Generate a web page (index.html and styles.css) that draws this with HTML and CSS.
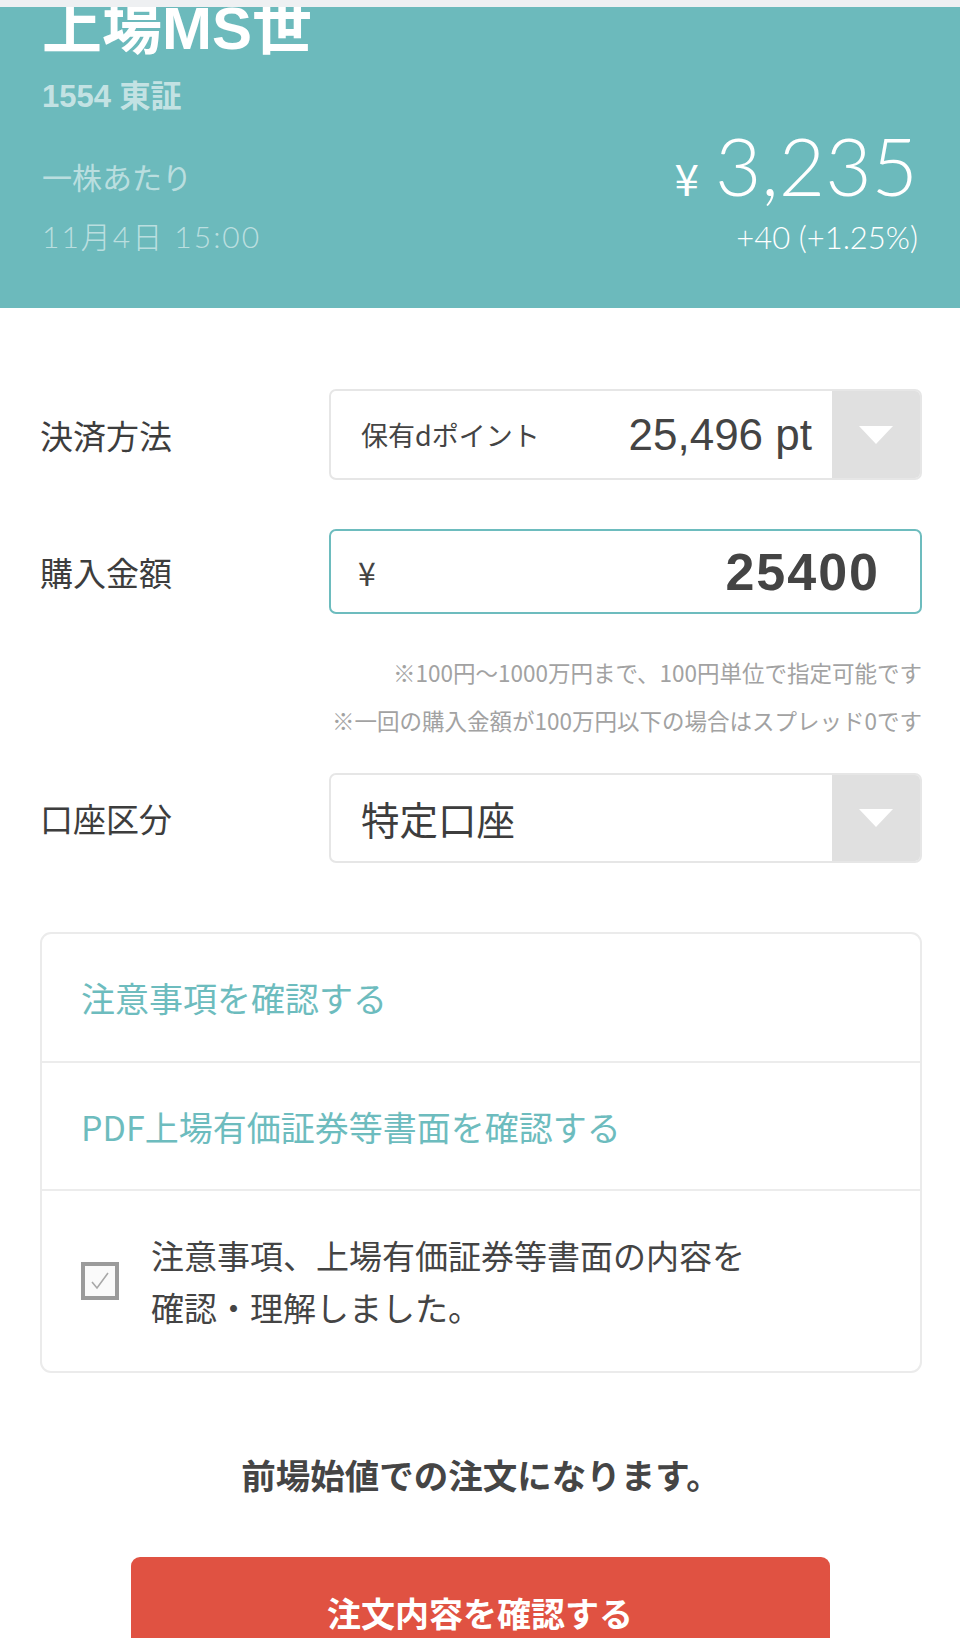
FILE: index.html
```html
<!DOCTYPE html>
<html lang="ja">
<head>
<meta charset="utf-8">
<link rel="stylesheet" href="styles.css">
</head>
<body>
<div class="topbar"></div>
<header class="hero">
  <div class="hero-left">
    <div class="title">上場MS世</div>
    <div class="code">1554 東証</div>
    <div class="per">一株あたり</div>
    <div class="date">11月4日 15:00</div>
  </div>
  <div class="hero-right">
    <div class="price"><span class="yen">¥</span><span class="num">3,235</span></div>
    <div class="change">+40 (+1.25%)</div>
  </div>
</header>

<main class="form">
  <div class="row row-pay">
    <div class="label">決済方法</div>
    <div class="select">
      <div class="select-body">
        <span class="sub">保有dポイント</span>
        <span class="pts">25,496 pt</span>
      </div>
      <div class="arrow"><span class="tri"></span></div>
    </div>
  </div>

  <div class="row row-amount">
    <div class="label">購入金額</div>
    <div class="input">
      <span class="input-yen">¥</span>
      <span class="input-val">25400</span>
    </div>
  </div>

  <div class="notes">
    <p>※100円～1000万円まで、100円単位で指定可能です</p>
    <p>※一回の購入金額が100万円以下の場合はスプレッド0です</p>
  </div>

  <div class="row row-account">
    <div class="label">口座区分</div>
    <div class="select">
      <div class="select-body">
        <span class="acct">特定口座</span>
      </div>
      <div class="arrow"><span class="tri"></span></div>
    </div>
  </div>

  <div class="card">
    <div class="card-row link">注意事項を確認する</div>
    <div class="card-row link">PDF上場有価証券等書面を確認する</div>
    <div class="card-row check">
      <span class="box">
        <svg width="22" height="22" viewBox="0 0 22 22"><path d="M3 12 L8 18 L19 3" fill="none" stroke="#a8a8a8" stroke-width="1.6"/></svg>
      </span>
      <span class="check-text">注意事項、上場有価証券等書面の内容を<br>確認・理解しました。</span>
    </div>
  </div>

  <p class="notice">前場始値での注文になります。</p>

  <div class="btn">注文内容を確認する</div>
</main>
</body>
</html>
```

FILE: styles.css
```css
* { box-sizing: border-box; }
html, body { margin: 0; padding: 0; }
body {
  background: #ffffff;
  font-family: "Noto Sans CJK JP", sans-serif;
  color: #444;
  width: 960px;
  height: 1638px;
  overflow: hidden;
}
.topbar {
  height: 7px;
  background: #eef0f2;
  position: relative;
  z-index: 2;
}
.hero {
  height: 301px;
  background: #6cbabc;
  display: flex;
  justify-content: space-between;
  padding: 0 42px 0 42px;
  overflow: hidden;
}
.hero-left { display: flex; flex-direction: column; }
.title {
  font-size: 60px;
  font-weight: 700;
  line-height: 60px;
  color: #fff;
  margin-top: -8px;
  font-family: "Liberation Sans", "Noto Sans CJK JP", sans-serif;
  white-space: nowrap;
}
.code {
  font-size: 31px;
  font-weight: 700;
  line-height: 40px;
  margin-top: 18px;
  color: rgba(255,255,255,0.62);
  font-family: "Liberation Sans", "Noto Sans CJK JP", sans-serif;
}
.per {
  font-size: 30px;
  font-weight: 400;
  line-height: 40px;
  margin-top: 39px;
  color: rgba(255,255,255,0.55);
}
.date {
  font-size: 30px;
  line-height: 40px;
  margin-top: 20px;
  color: rgba(255,255,255,0.55);
  font-family: "Lato", "Noto Sans CJK JP", sans-serif;
  font-weight: 300;
  letter-spacing: 2px;
}
.hero-right {
  display: flex;
  flex-direction: column;
  align-items: flex-end;
  padding-top: 118px;
  color: #fff;
  font-family: "Lato", "Noto Sans CJK JP", sans-serif;
  font-weight: 300;
}
.price { line-height: 80px; white-space: nowrap; }
.price .yen { font-size: 44px; margin-right: 16px; font-family: "Noto Sans CJK JP", sans-serif; font-weight: 400; }
.price .num { font-size: 80px; }
.change { font-size: 31px; line-height: 36px; margin-top: -11px; }

.form { padding: 0 38px 0 40px; }
.row { display: flex; align-items: center; }
.label { width: 289px; font-size: 33px; color: #3d3d3d; flex-shrink: 0; }
.row-pay { margin-top: 81px; }
.select {
  flex: 1;
  display: flex;
  border: 2px solid #e6e6e6;
  border-radius: 7px;
  overflow: hidden;
  background: #fff;
}
.row-pay .select { height: 91px; }
.row-account .select { height: 90px; }
.select-body {
  flex: 1;
  display: flex;
  align-items: center;
  justify-content: space-between;
  padding: 0 20px 0 30px;
}
.sub { font-size: 27px; color: #444; }
.pts {
  font-family: "Liberation Sans", sans-serif;
  font-size: 44px;
  color: #444;
}
.acct { font-size: 38.5px; color: #3d3d3d; }
.arrow {
  width: 88px;
  background: #e0e0e0;
  display: flex;
  align-items: center;
  justify-content: center;
}
.tri {
  width: 0; height: 0;
  border-left: 17px solid transparent;
  border-right: 17px solid transparent;
  border-top: 18px solid #fff;
}
.row-amount { margin-top: 49px; }
.input {
  flex: 1;
  height: 85px;
  border: 2px solid #6dbcbe;
  border-radius: 7px;
  display: flex;
  align-items: center;
  justify-content: space-between;
  padding: 0 40px 0 27px;
}
.input-yen { font-size: 32px; color: #444; }
.input-val {
  font-family: "Liberation Sans", sans-serif;
  font-weight: 700;
  font-size: 52px;
  letter-spacing: 2px;
  color: #444;
}
.notes { margin-top: 34px; text-align: right; }
.notes p { margin: 0; font-size: 22.5px; line-height: 48px; color: #a2a2a2; }
.row-account { margin-top: 29px; }

.card {
  margin-top: 69px;
  border: 2px solid #ebebeb;
  border-radius: 11px;
  overflow: hidden;
}
.card-row { border-top: 2px solid #ececec; }
.card-row:first-child { border-top: none; }
.link {
  height: 127px;
  display: flex;
  align-items: center;
  padding-left: 39px;
  font-size: 34px;
  color: #6dbcbe;
}
.card-row.link:nth-child(2) { height: 128px; }
.check {
  height: 182px;
  display: flex;
  align-items: center;
  padding-left: 39px;
}
.box {
  width: 38px; height: 38px;
  border: 4px solid #9b9b9b;
  display: flex;
  align-items: center;
  justify-content: center;
  background: #fafafa;
  flex-shrink: 0;
}
.check-text {
  margin-left: 32px;
  font-size: 33px;
  line-height: 52px;
  color: #444;
}
.notice {
  margin: 76px 0 0;
  text-align: center;
  font-size: 34.5px;
  font-weight: 700;
  line-height: 50px;
  color: #454545;
}
.btn {
  margin: 58px auto 0;
  width: 699px;
  height: 110px;
  background: #e05242;
  border-radius: 9px;
  color: #fff;
  font-size: 34px;
  font-weight: 700;
  display: flex;
  align-items: center;
  justify-content: center;
  position: relative;
  left: -1px;
}
```
